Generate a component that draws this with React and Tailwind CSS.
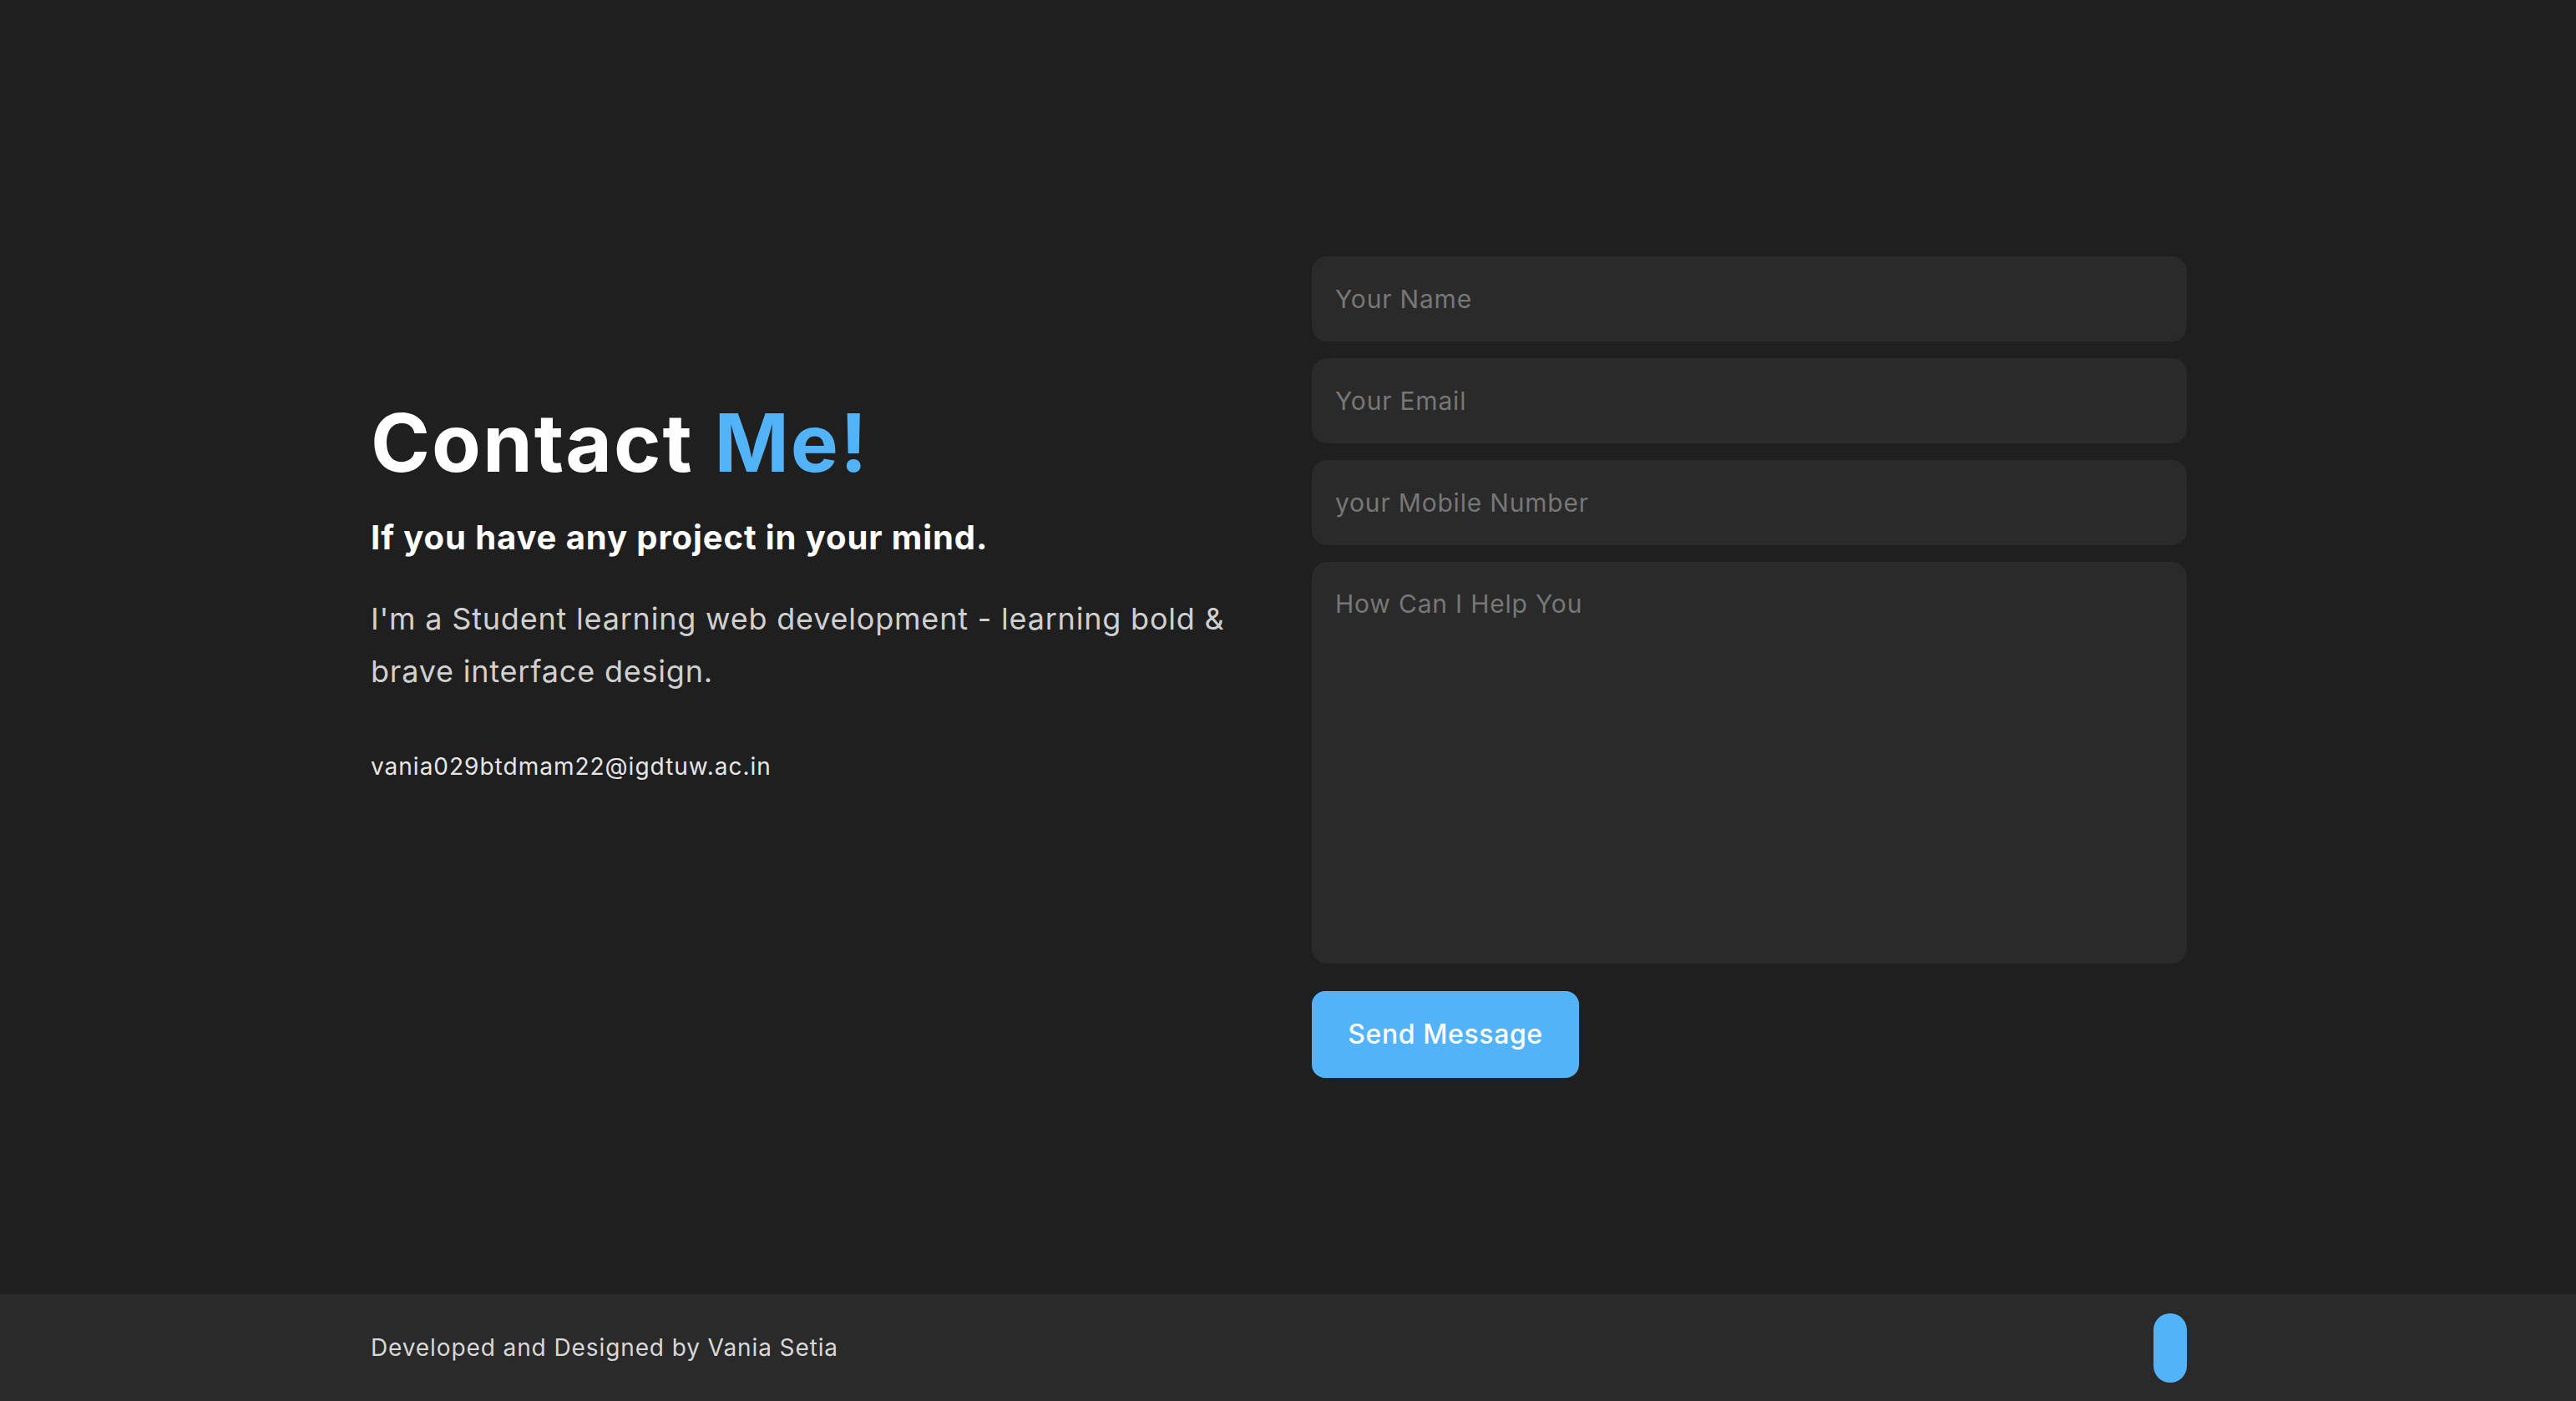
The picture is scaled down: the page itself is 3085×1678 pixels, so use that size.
import React from 'react';

const font = { fontFamily: 'Inter, "Noto Sans", sans-serif' };

function Field({ placeholder }) {
  return (
    <input
      type="text"
      placeholder={placeholder}
      className="w-full h-[102px] rounded-[18px] bg-[#2a2a2a] px-[28px] text-[30px] tracking-[0.8px] text-white placeholder:text-[#777777] outline-none"
    />
  );
}

export default function App() {
  return (
    <div className="min-h-screen bg-[#1f1f1f] flex flex-col" style={font}>
      {/* Contact section */}
      <section className="h-[1550px] pt-[307px] pl-[444px] pr-[466px]">
        <div className="flex justify-between">
          <div className="w-[1060px] pt-[175px]">
            <h1 className="text-[96px] leading-none font-bold text-white tracking-[2px]">
              Contact <span className="text-[#52b3f8]">Me!</span>
            </h1>
            <h3 className="mt-[36px] text-[40px] leading-[60px] font-bold text-white tracking-[0.9px]">
              If you have any project in your mind.
            </h3>
            <p className="mt-[36px] text-[36px] leading-[63px] text-[#d0d0d0] tracking-[0.8px]">
              I'm a Student learning web development - learning bold &amp;
              <br />
              brave interface design.
            </p>
            <p className="mt-[61px] text-[28px] leading-[42px] text-[#e6e6e6] tracking-[1px]">
              vania029btdmam22@igdtuw.ac.in
            </p>
          </div>

          <form className="w-[1048px] flex flex-col gap-[20px]">
            <Field placeholder="Your Name" />
            <Field placeholder="Your Email" />
            <Field placeholder="your Mobile Number" />
            <textarea
              placeholder="How Can I Help You"
              className="w-full h-[481px] resize-none rounded-[18px] bg-[#2a2a2a] p-[28px] text-[30px] leading-[45px] tracking-[0.8px] text-white placeholder:text-[#777777] outline-none"
            />
            <div className="pt-[13px]">
              <button
                type="button"
                className="w-[320px] h-[104px] rounded-[16px] bg-[#52b3f8] text-[32px] font-medium tracking-[0.6px] text-white"
              >
                Send Message
              </button>
            </div>
          </form>
        </div>
      </section>

      {/* Footer */}
      <footer className="h-[128px] bg-[#2a2a2a] pl-[444px] pr-[466px] flex items-center justify-between">
        <p className="text-[28px] text-[#d8d8d8] tracking-[0.9px]">Developed and Designed by Vania Setia</p>
        <a href="#" className="w-[40px] h-[83px] rounded-full bg-[#52b3f8]" />
      </footer>
    </div>
  );
}
